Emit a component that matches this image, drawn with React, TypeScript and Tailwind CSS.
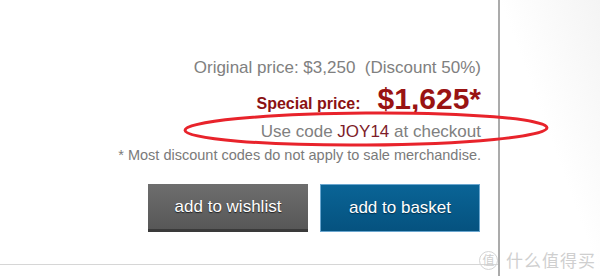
import React from 'react';

const App: React.FC = () => {
  return (
    <div className="relative w-[600px] h-[276px] overflow-hidden bg-white font-['Liberation_Sans',Arial,sans-serif]">
      <div className="flex h-full">
        <div className="flex w-[500px] flex-col border-r-2 border-[#ababab]">
          <div className="flex flex-col items-end pr-[17px] pt-[58px]">
            <p className="whitespace-pre text-[17px] leading-[20px] text-[#808080]">
              Original price: $3,250  (Discount 50%)
            </p>
            <div className="mt-[6px] flex items-baseline gap-[17px] leading-[30px]">
              <span className="text-[16px] font-bold text-[#8a1212]">Special price:</span>
              <span className="text-[30px] font-bold text-[#991313]">$1,625*</span>
            </div>
            <p className="mt-[3px] text-[17px] leading-[20px] text-[#808080]">
              Use code <span className="text-[#7d1d2a]">JOY14</span> at checkout
            </p>
            <p className="mt-[5px] text-[14.5px] leading-[17px] text-[#7a7a7a]">
              * Most discount codes do not apply to sale merchandise.
            </p>
          </div>
          <div className="mt-[20px] flex justify-end gap-[12px] pr-[18px]">
            <button className="h-[48px] w-[160px] border-b-[3px] border-[#3a3a3a] bg-gradient-to-b from-[#6e6e6e] to-[#575757] text-[17px] text-white [text-shadow:0_1px_1px_#222]">
              add to wishlist
            </button>
            <button className="h-[48px] w-[160px] border border-[#6aa6cf] bg-gradient-to-b from-[#0a6496] to-[#05527f] text-[17px] text-white [text-shadow:0_1px_1px_#02314d]">
              add to basket
            </button>
          </div>
          <div className="mt-auto mb-[11px] h-px bg-[#d6d6d6]" />
        </div>
        <div className="flex-1 bg-gradient-to-bl from-[#f4f4f4] via-white to-white" />
      </div>

      <svg className="absolute left-0 top-0" width="600" height="276" viewBox="0 0 600 276">
        <ellipse cx="366" cy="129" rx="181" ry="16" fill="none" stroke="#e8232b" strokeWidth="3" transform="rotate(-0.4 366 129)" />
      </svg>

      <div className="absolute bottom-[6px] right-[4px] flex items-center gap-[8px] font-['Noto_Sans_CJK_SC',sans-serif] text-[#cfcfcf]">
        <span className="flex h-[19px] w-[19px] items-center justify-center rounded-full border border-[#d4d4d4] text-[12px] leading-none">值</span>
        <span className="text-[17px] leading-[20px] tracking-[1px]">什么值得买</span>
      </div>
    </div>
  );
};

export default App;
